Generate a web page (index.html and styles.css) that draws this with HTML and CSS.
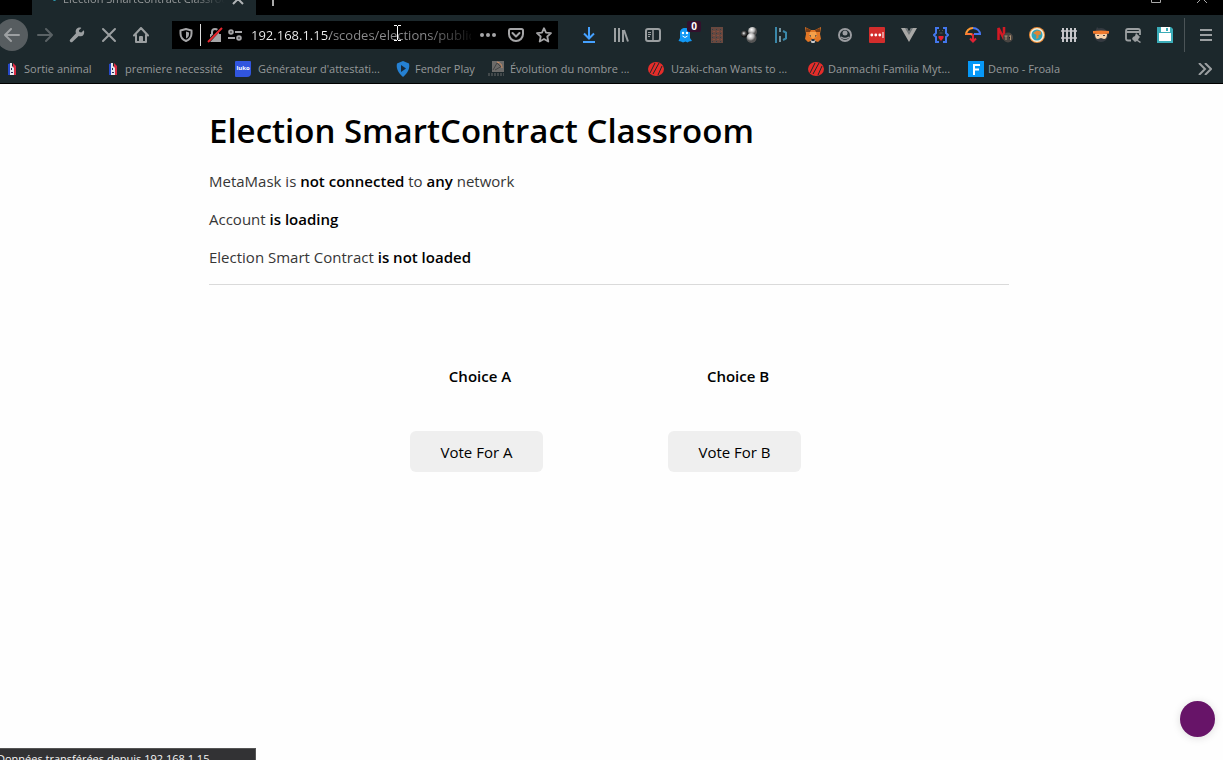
FILE: index.html
```html
<!DOCTYPE html>
<html lang="en">
<head>
<meta charset="utf-8">
<title>Election SmartContract Classroom</title>
<link rel="stylesheet" href="styles.css">
</head>
<body>
<header class="chrome">
  <div class="tabstrip">
    <div class="tab">
      <span class="tab-dot"></span>
      <span class="tab-title">Election SmartContract Classroom</span>
      <button class="tab-close" aria-label="Close tab"><svg width="12" height="12" viewBox="0 0 12 12" fill="none" stroke="#b0b4b6" stroke-width="2"><path d="M1 1l10 10M11 1L1 11"/></svg></button>
    </div>
    <button class="tab-new" aria-label="New tab"><svg width="14" height="14" viewBox="0 0 14 14" fill="none" stroke="#aaa" stroke-width="2"><path d="M7 0v14M0 7h14"/></svg></button>
    <div class="window-buttons">
      <button aria-label="Maximize"><svg width="10" height="10" viewBox="0 0 10 10" fill="none" stroke="#aaa"><path d="M.5.5h9v9h-9z"/></svg></button>
      <button aria-label="Close window"><svg width="10" height="10" viewBox="0 0 10 10" fill="none" stroke="#aaa"><path d="M0 0l10 10M10 0L0 10"/></svg></button>
    </div>
  </div>

  <nav class="toolbar" aria-label="Navigation">
    <div class="nav-buttons">
      <button class="back" aria-label="Back"><svg width="16" height="16" viewBox="0 0 16 16" fill="none" stroke="#9da0a2" stroke-width="2" stroke-linecap="round" stroke-linejoin="round"><path d="M15 8H1M7 2L1 8l6 6"/></svg></button>
      <button aria-label="Forward"><svg width="16" height="16" viewBox="0 0 16 16" fill="none" stroke="#5a6265" stroke-width="2" stroke-linecap="round" stroke-linejoin="round"><path d="M1 8h14M9 2l6 6-6 6"/></svg></button>
      <button aria-label="Developer tools"><svg width="16" height="16" viewBox="0 0 16 16"><path fill="#9b9fa1" d="M14.8 3.2l-2.5 2.4-2-.5-.4-1.8L12.400.9C10.500.2 8.400.7 7.300 2.200 6.500 3.400 6.400 4.900 7 6.200L1.200 12.400a1.600 1.600 0 0 0 2.400 2.300L9.700 9c1.600.7 3.500.3 4.600-1.100 1-1.300 1.200-3.200.5-4.700z"/></svg></button>
      <button aria-label="Stop"><svg width="16" height="16" viewBox="0 0 16 16" fill="none" stroke="#9b9fa1" stroke-width="2" stroke-linecap="round"><path d="M2 2l12 12M14 2L2 14"/></svg></button>
      <button aria-label="Home"><svg width="16" height="16" viewBox="0 0 16 16" fill="none" stroke="#9b9fa1" stroke-width="2" stroke-linejoin="round" stroke-linecap="round"><path d="M1 8.500L8 1l7 7.500M3 8v7h10V8M7 15v-5h2v5"/></svg></button>
    </div>

    <div class="urlbar">
      <button class="shield" aria-label="Tracking protection"><svg width="14" height="14" viewBox="0 0 14 14"><path fill="none" stroke="#a5a5a7" stroke-width="2" stroke-linejoin="round" d="M7 1l5.500 1.500v3c0 3.500-2 6-5.500 7.500-3.500-1.500-5.500-4-5.500-7.500v-3z"/><path fill="#a5a5a7" d="M7 3.500l3 1v1.500c0 2-1 3.500-3 4.500z"/></svg></button>
      <button class="lock" aria-label="Connection is not secure"><svg width="16" height="16" viewBox="0 0 16 16"><path fill="none" stroke="#a5a5a7" stroke-width="2" d="M5 8V5a3 3 0 0 1 6 0v3"/><path fill="#a5a5a7" d="M3 7h11v8H3z"/><path stroke="#000" stroke-width="3" d="M2 14L14 1"/><path stroke="#e8272f" stroke-width="2" d="M1 15L15 1"/></svg></button>
      <button class="perms" aria-label="Permissions"><svg width="14" height="12" viewBox="0 0 14 12" fill="none" stroke="#a5a5a7" stroke-width="2"><circle cx="3" cy="3" r="1.800"/><path d="M7 3h7M0 9h7"/><circle cx="11" cy="9" r="1.800"/></svg></button>
      <input class="url" type="text" aria-label="Address" value="192.168.1.15/scodes/elections/public/">
      <button class="dots" aria-label="Page actions"><svg width="16" height="16" viewBox="0 0 16 16" fill="#a5a5a7"><circle cx="2" cy="8" r="2"/><circle cx="8" cy="8" r="2"/><circle cx="14" cy="8" r="2"/></svg></button>
      <button class="pocket" aria-label="Save to Pocket"><svg width="16" height="16" viewBox="0 0 16 16" fill="none" stroke="#a5a5a7" stroke-width="2" stroke-linecap="round" stroke-linejoin="round"><path d="M2.500 2h11c1 0 1.500.5 1.500 1.500V7a7 7 0 0 1-14 0V3.500C1 2.500 1.500 2 2.500 2z"/><path d="M4.500 6L8 9.500 11.500 6"/></svg></button>
      <button class="star" aria-label="Bookmark this page"><svg width="16" height="16" viewBox="0 0 16 16" fill="none" stroke="#a5a5a7" stroke-width="1.800" stroke-linejoin="round"><path d="M8 1.200l2 4.500 5 .5-3.700 3.300 1 5L8 12l-4.300 2.500 1-5L1 6.200l5-.5z"/></svg></button>
      <svg class="caret" width="8" height="16" viewBox="0 0 8 16" fill="none" stroke="#fff"><path d="M0 .5h3M4 .5h3M3.500 1v14M0 15.500h3M4 15.500h3"/></svg>
    </div>

    <div class="extensions">
      <button aria-label="Downloads"><svg width="16" height="16" viewBox="0 0 16 16" fill="none" stroke="#45a1ff" stroke-width="2"><path d="M8 0v11M3 6.500l5 5 5-5M2 15h12"/></svg></button>
      <button aria-label="Library"><svg width="16" height="16" viewBox="0 0 16 16" fill="none" stroke="#9b9fa1" stroke-width="2"><path d="M2 1v14M6 1v14M10 3v12M11 3l4 11.500"/></svg></button>
      <button aria-label="Sidebars"><svg width="16" height="16" viewBox="0 0 16 16" fill="none" stroke="#9b9fa1"><rect x="1" y="2" width="14" height="12" rx="2" stroke-width="2"/><path stroke-width="1.500" d="M8 2v12"/><path d="M3 5.500h3M3 7.500h3M3 9.500h2"/></svg></button>
      <button class="ghost" aria-label="Ghostery"><svg width="16" height="16" viewBox="0 0 16 16"><path fill="#1198f5" d="M3 6c0-3.500 2-5 5-5s5 1.500 5 5v5l2 3-3 .5-1.500 1-2-1-2.500 1-2-1L1.500 14 3 11z"/><circle cx="6" cy="6" r="1.200" fill="#fff"/><circle cx="10" cy="6" r="1.200" fill="#fff"/><path fill="none" stroke="#fff" d="M5.500 9q2.500 3 5 0"/></svg><span class="badge">0</span></button>
      <button aria-label="Grid"><svg width="16" height="16" viewBox="0 0 16 16"><path fill="#68483f" d="M2 0h12v16H2z"/><path stroke="#30404a" stroke-dasharray="1 3" d="M3 2.500h11M3 6.500h11M3 10.500h11M3 14.500h11"/><path stroke="#8a4e3e" stroke-dasharray="2 2" d="M4 4.500h9M4 8.500h9M4 12.500h9"/></svg></button>
      <button aria-label="Spheres"><svg width="16" height="16" viewBox="0 0 16 16"><defs><radialGradient id="ball" cx=".4" cy=".3"><stop offset="0" stop-color="#fff"/><stop offset=".6" stop-color="#b8b8b8"/><stop offset="1" stop-color="#555"/></radialGradient><radialGradient id="dark" cx=".4" cy=".4"><stop offset="0" stop-color="#eee"/><stop offset=".5" stop-color="#555"/><stop offset="1" stop-color="#111"/></radialGradient></defs><circle cx="3.500" cy="7" r="3.500" fill="url(#dark)"/><circle cx="11.500" cy="4.500" r="4.500" fill="url(#ball)"/><circle cx="10.500" cy="11" r="5" fill="url(#ball)"/></svg></button>
      <button aria-label="Containers"><svg width="16" height="16" viewBox="0 0 16 16" fill="none" stroke-width="2"><path stroke="#3a88aa" d="M3 0v16"/><path stroke="#75939f" d="M7 1v4M7 9v6"/><path stroke="#3a88aa" d="M10 4l3 1.500v6L10 13"/></svg></button>
      <button aria-label="MetaMask"><svg width="16" height="16" viewBox="0 0 16 16"><path fill="#e27625" d="M0 0l6 3h4l6-3-1 7 1 5-3 3-3-1H6l-3 1-3-3 1-5z"/><path fill="#7a3d16" d="M1 5l4 0 1-2-5-2zM15 5h-4l-1-2 5-2z"/><path fill="#f5a04a" d="M5 5h6l1 4-4 3-4-3z"/><path fill="#233447" d="M4 8l2 .5V10zM12 8l-2 .5V10z"/><path fill="#ccc" d="M5.500 13h5l-1 3h-3z"/><path fill="#233447" d="M6.500 12h3v2h-3z"/></svg></button>
      <button aria-label="Account"><svg width="16" height="16" viewBox="0 0 16 16"><circle cx="8" cy="8" r="6" fill="none" stroke="#9a9ca0" stroke-width="2"/><circle cx="8" cy="6" r="2.500" fill="#9a9ca0"/><path fill="none" stroke="#9a9ca0" stroke-width="1.500" d="M4 10q4 3 8 0"/></svg></button>
      <button aria-label="LastPass"><svg width="16" height="16" viewBox="0 0 16 16"><rect width="16" height="16" rx="1" fill="#d32d2c"/><g fill="#fff"><circle cx="2.800" cy="8" r="1.400"/><circle cx="6.800" cy="8" r="1.400"/><circle cx="10.800" cy="8" r="1.400"/><path d="M13.500 5h1v6h-1z"/></g></svg></button>
      <button aria-label="Vue"><svg width="16" height="16" viewBox="0 0 16 16"><path fill="#a8a8a6" d="M0 1h6l2 4 2-4h6L8 15z"/><path fill="#6f7577" d="M4 1h2l2 4 2-4h2L8 8z"/></svg></button>
      <button aria-label="JSON"><svg width="16" height="16" viewBox="0 0 16 16"><path fill="none" stroke="#4377ed" stroke-width="2" d="M6 1H3v5L1 8l2 2v5h3M10 1h3v5l2 2-2 2v5h-3"/><path fill="none" stroke="#555" d="M6 3.500h1M9 3.500h1M6.500 6h3"/><path fill="#e82032" d="M5.500 9h5v2L8 14l-2.500-3z"/></svg></button>
      <button aria-label="Umbrella"><svg width="16" height="16" viewBox="0 0 16 16" fill="none"><path stroke="#ff9933" stroke-width="2" d="M1 8c0-4 3-7 7-7"/><path stroke="#ff7635" stroke-width="2" d="M1 7h5l2 1"/><path stroke="#4674ef" stroke-width="2" d="M8 1c4 0 7 3 7 6H9"/><path stroke="#df2335" stroke-width="2" d="M8 7v7M5 11.500l3 3 3-3"/></svg></button>
      <button aria-label="Netflix"><svg width="16" height="16" viewBox="0 0 16 16"><path fill="none" stroke="#d51924" stroke-width="2.500" d="M1.500 13V1L7 12V0"/><circle cx="11" cy="10.500" r="5" fill="#4a4542"/><path stroke="#ad9173" d="M7.500 9h3M9 9v4M12 9.500l1.500-1V13"/></svg></button>
      <button aria-label="Globe"><svg width="16" height="16" viewBox="0 0 16 16"><circle cx="8" cy="8" r="8" fill="#e98b36"/><circle cx="8" cy="8" r="7" fill="#f7eedb"/><circle cx="8" cy="8" r="5.500" fill="#30a4ba"/><path fill="#df8534" d="M4 6l4-2.500 4 1v3L9.500 8v3L7 12l.5-4z"/></svg></button>
      <button aria-label="Fence"><svg width="16" height="16" viewBox="0 0 16 16" stroke="#c6c6ca" stroke-width="2"><path d="M2 1v14M6 1v14M10 1v14M14 1v14"/><path stroke-width="1.500" d="M0 4h16M0 11h16"/></svg></button>
      <button aria-label="Ninja"><svg width="16" height="16" viewBox="0 0 16 16"><circle cx="8" cy="8" r="7" fill="#353a41"/><path fill="#353a41" d="M4 0l3 3H3z"/><path fill="#f8d2aa" d="M2 7h12q0 5-3 5l-3-1-3 1q-3 0-3-5z"/><path fill="#f17b2e" d="M0 4q8-1 16 0v2.500Q8 8 0 6.500z"/><path fill="#444" d="M4 8h2v1H4zM10 8h2v1h-2z"/></svg></button>
      <button aria-label="Page editor"><svg width="16" height="16" viewBox="0 0 16 16" fill="none" stroke="#9b9fa1" stroke-width="1.800"><path d="M6 13.500H3c-1.500 0-2-.5-2-2V4c0-1.500.5-2 2-2h10c1.500 0 2 .5 2 2v4M1 5h14"/><path fill="#9b9fa1" stroke="none" d="M11 6l4 4-1 1-1 2 3 2-1 1-3-2-2 1-3-3 1-2 2-1z"/></svg></button>
      <button aria-label="Save"><svg width="16" height="16" viewBox="0 0 16 16"><path fill="#3bacb8" d="M0 0h14l2 2v14H0z"/><path fill="#fff" d="M4 0h9v5H4zM2 6h12v8H2z"/><path fill="#3bacb8" d="M9 1h2v3H9z"/></svg></button>
    </div>
    <button class="menu" aria-label="Menu"><svg width="12" height="12" viewBox="0 0 12 12" stroke="#9b9fa1" stroke-width="2"><path d="M0 1h12M0 6h12M0 11h12"/></svg></button>
  </nav>

  <nav class="bookmarks" aria-label="Bookmarks">
    <a class="bookmark first" href="#"><svg width="16" height="16" viewBox="0 0 16 16"><path fill="#2749c9" d="M4 3l3-1v12H4z"/><path fill="#d92b43" d="M9 2l3 3v9H9z"/><path fill="#e6e6ed" d="M6 2h2v3l2 2v7H6z"/><path fill="#222b55" d="M7 7h1v2H7zM7 11h2v1H7z"/></svg><span>Sortie animal</span></a>
    <a class="bookmark second" href="#"><svg width="16" height="16" viewBox="0 0 16 16"><path fill="#2749c9" d="M4 3l3-1v12H4z"/><path fill="#d92b43" d="M9 2l3 3v9H9z"/><path fill="#e6e6ed" d="M6 2h2v3l2 2v7H6z"/><path fill="#222b55" d="M7 7h1v2H7zM7 11h2v1H7z"/></svg><span>premiere necessité</span></a>
    <a class="bookmark wide roomy" href="#"><span class="luko">luko</span><span>Générateur d'attestati...</span></a>
    <a class="bookmark fender" href="#"><svg width="16" height="16" viewBox="0 0 16 16"><path fill="#2581d3" d="M8 0l6 2.500c1 4-.5 9-6 13.500C2.500 11.500 1 6.500 2 2.500z"/><path fill="#182a3a" d="M6 4l5 3.500L6 11z"/></svg><span>Fender Play</span></a>
    <a class="bookmark wide insee" href="#"><svg width="16" height="16" viewBox="0 0 16 16"><path fill="#6c6b69" d="M4 0h12v11H4z"/><path fill="none" stroke="#444" d="M5 9l4-7 4 4M7 9l7-4"/><path fill="none" stroke="#cf8e63" d="M9 1q5 1 5 6"/><path stroke="#42494b" stroke-width="3" stroke-dasharray="2 1" d="M0 13.500h16"/></svg><span>Évolution du nombre ...</span></a>
    <a class="bookmark wide roomy" href="#"><svg width="16" height="16" viewBox="0 0 16 16"><ellipse cx="8" cy="8" rx="8" ry="7" fill="#e52d2a"/><path fill="none" stroke="#1c282c" d="M2 12L7 2M5 13l6-11M10 14l4-9"/></svg><span>Uzaki-chan Wants to ...</span></a>
    <a class="bookmark wide" href="#"><svg width="16" height="16" viewBox="0 0 16 16"><ellipse cx="8" cy="8" rx="8" ry="7" fill="#e52d2a"/><path fill="none" stroke="#1c282c" d="M2 12L7 2M5 13l6-11M10 14l4-9"/></svg><span>Danmachi Familia Myt...</span></a>
    <a class="bookmark" href="#"><svg width="16" height="16" viewBox="0 0 16 16"><path fill="#0698f7" d="M0 0h16v16H0z"/><path fill="none" stroke="#fff" stroke-width="2" d="M6 14V4h6M6 8.500h5"/></svg><span>Demo - Froala</span></a>
    <button class="more" aria-label="More bookmarks"><svg width="14" height="12" viewBox="0 0 14 12" fill="none" stroke="#9b9fa1" stroke-width="2"><path d="M1 0l6 6-6 6M7 0l6 6-6 6"/></svg></button>
  </nav>
</header>

<main class="page">
  <div class="container">
    <h1>Election SmartContract Classroom</h1>
    <p>MetaMask is <strong>not connected</strong> to <strong>any</strong> network</p>
    <p>Account <strong>is loading</strong></p>
    <p>Election Smart Contract <strong>is not loaded</strong></p>
    <hr>
    <div class="choices">
      <section class="choice"><h2>Choice A</h2><button class="vote">Vote For A</button></section>
      <section class="choice"><h2>Choice B</h2><button class="vote">Vote For B</button></section>
    </div>
  </div>
</main>
<button class="fab" aria-label="Open widget"></button>
<div class="status">Données transférées depuis 192.168.1.15...</div>
</body>
</html>
```
FILE: styles.css
```css
* { box-sizing: border-box; }
html, body { height: 100%; }
body {
  margin: 0;
  display: flex;
  flex-direction: column;
  overflow: hidden;
  background: #fefefe;
  color: #363636;
  font: 15px/24px "Open Sans", "Noto Sans", sans-serif;
}
button {
  padding: 0;
  border: 0;
  background: none;
  font: inherit;
  color: inherit;
  display: flex;
  align-items: center;
  justify-content: center;
}
svg { flex: none; display: block; }

/* Browser chrome */
.chrome {
  flex: none;
  background: #1c282c;
  border-bottom: 1px solid #000;
  color: #96999a;
  font-size: 11px;
  line-height: 16px;
}
.tabstrip {
  height: 15px;
  display: flex;
  align-items: flex-end;
  overflow: hidden;
  background: #000;
}
.tab {
  flex: none;
  width: 224px;
  height: 32px;
  margin-left: 32px;
  padding: 0 12px 0 21px;
  display: flex;
  align-items: center;
  gap: 7px;
  background: #1c282c;
}
.tab-dot { flex: none; width: 3px; height: 3px; border-radius: 50%; background: #2f9bb0; }
.tab-title {
  flex: 1;
  overflow: hidden;
  white-space: nowrap;
  -webkit-mask-image: linear-gradient(90deg, #000 80%, transparent);
  mask-image: linear-gradient(90deg, #000 80%, transparent);
}
.tab-new { width: 34px; height: 32px; }
.window-buttons { margin-left: auto; display: flex; padding-right: 16px; gap: 36px; }
.window-buttons button { height: 34px; width: 10px; }

.toolbar {
  height: 40px;
  display: flex;
  align-items: center;
}
.nav-buttons { display: flex; align-items: center; width: 172px; flex: none; }
.nav-buttons button { width: 32px; height: 32px; }
.nav-buttons .back {
  margin-left: -4px;
  margin-right: 1px;
  border-radius: 50%;
  background: #575d60;
}
.urlbar {
  position: relative;
  flex: 1;
  height: 28px;
  padding: 0 6px 0 7px;
  display: flex;
  align-items: center;
  background: #000;
}
.shield { width: 22px; height: 22px; padding-right: 8px; border-right: 1px solid #ddd; }
.lock { margin-left: 6px; }
.perms { margin: 0 9px 0 5px; }
.url {
  flex: 1;
  min-width: 0;
  height: 28px;
  padding: 0;
  border: 0;
  outline: 0;
  font: 13px/20px "Open Sans", "Noto Sans", sans-serif;
  color: transparent;
  background: linear-gradient(90deg, #f3f3f3 79px, #8d8d8f 79px, #8d8d8f 80%, #111 100%);
  -webkit-background-clip: text;
  background-clip: text;
}
.dots { margin: 0 12px 0 9px; }
.pocket { margin-right: 12px; }
.caret { position: absolute; left: 222px; top: 4px; }
.extensions { flex: none; display: flex; margin-left: 15px; }
.extensions button { position: relative; width: 32px; height: 32px; }
.badge {
  position: absolute;
  top: 2px;
  right: 0;
  width: 14px;
  border-radius: 2px;
  background: #33102c;
  color: #fff;
  font-size: 10px;
  font-weight: 700;
  line-height: 11px;
}
.menu { flex: none; width: 39px; height: 34px; margin-left: 3px; padding-left: 4px; border-left: 1px solid #4b5457; }

.bookmarks {
  height: 28px;
  display: flex;
  align-items: center;
  padding-left: 4px;
}
.bookmark {
  flex: none;
  display: flex;
  align-items: center;
  gap: 4px;
  color: inherit;
  text-decoration: none;
  white-space: nowrap;
}
.first { width: 101px; }
.second { width: 130px; }
.wide { width: 160px; }
.roomy { gap: 7px; }
.fender { width: 93px; }
.insee { gap: 6px; }
.luko {
  width: 16px;
  height: 16px;
  border-radius: 1px 1px 4px 1px;
  background: #3155df;
  color: #fff;
  font-size: 6px;
  font-weight: 700;
  line-height: 15px;
  text-align: center;
}
.more { margin-left: auto; margin-right: 11px; }

/* Election page */
.page { flex: 1; padding: 23px 5px 0 0; }
.container { max-width: 800px; margin: 0 auto; }
h1 {
  margin: 0 0 14px;
  color: #000;
  font-size: 33px;
  font-weight: 600;
  line-height: 48px;
}
p { margin: 0 0 14px; }
p:last-of-type { margin-bottom: 15px; }
strong, h2 { color: #000; font-weight: 600; }
hr { height: 1px; margin: 0; border: 0; background: #dadada; }
.choices {
  display: flex;
  justify-content: center;
  gap: 118px;
  padding-top: 79px;
}
.choice { width: 140px; }
h2 { margin: 0 0 43px; font-size: 15px; line-height: 24px; text-align: center; }
.vote {
  width: 133px;
  height: 41px;
  border-radius: 6px;
  background: #efefef;
  color: #000;
}
.fab {
  position: fixed;
  right: 8px;
  bottom: 23px;
  width: 35px;
  height: 36px;
  border-radius: 50%;
  background: #671468;
  box-shadow: 0 1px 8px #0002;
}
.status {
  position: fixed;
  left: 0;
  bottom: 0;
  width: 256px;
  height: 12px;
  padding-top: 2px;
  overflow: hidden;
  border: solid #555;
  border-width: 1px 1px 0 0;
  background: #323234;
  color: #f5f5f5;
  font-size: 11px;
  line-height: 16px;
  text-indent: -3px;
  white-space: nowrap;
}
```
